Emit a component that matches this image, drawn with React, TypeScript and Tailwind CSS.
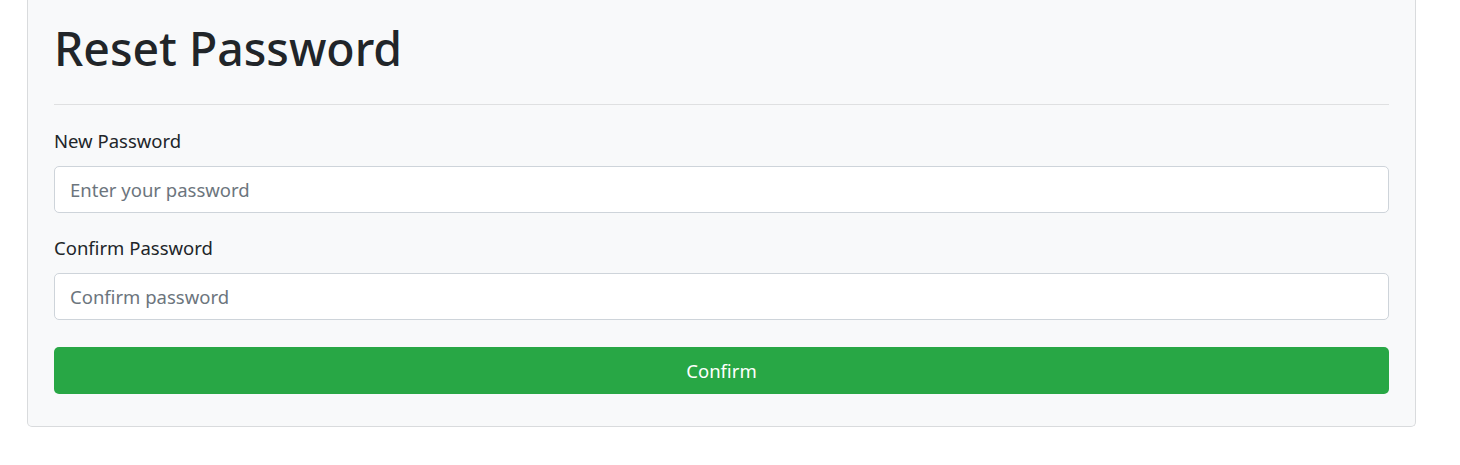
import React from "react";

export default function App() {
  const font = { fontFamily: '"Noto Sans", "Open Sans", Arial, sans-serif' };
  return (
    <div className="min-h-[465px] w-full bg-white" style={font}>
      <div className="pl-[27px]">
        <div className="w-[1389px] rounded-b-[5px] border-x border-b border-[#d9dbdd] bg-[#f8f9fa] px-[26px] pt-[18px] pb-[32px]">
          <h1 className="text-[46.4px] font-medium leading-[60px] text-[#212529]">Reset Password</h1>
          <div className="mt-[26px] h-px bg-[#dfe0e1]" />
          <div className="mt-[21px]">
            <label className="block text-[18.5px] leading-[30px] text-[#212529]">New Password</label>
            <input
              type="password"
              placeholder="Enter your password"
              className="mt-[10px] block h-[47px] w-full rounded-[5px] border border-[#ced4da] bg-white px-[15px] text-[18.5px] text-[#495057] placeholder:text-[#6c757d] outline-none"
            />
          </div>
          <div className="mt-[20px]">
            <label className="block text-[18.5px] leading-[30px] text-[#212529]">Confirm Password</label>
            <input
              type="password"
              placeholder="Confirm password"
              className="mt-[10px] block h-[47px] w-full rounded-[5px] border border-[#ced4da] bg-white px-[15px] text-[18.5px] text-[#495057] placeholder:text-[#6c757d] outline-none"
            />
          </div>
          <button className="mt-[27px] block h-[47px] w-full rounded-[5px] bg-[#28a745] text-[18.5px] text-white">
            Confirm
          </button>
        </div>
      </div>
    </div>
  );
}
